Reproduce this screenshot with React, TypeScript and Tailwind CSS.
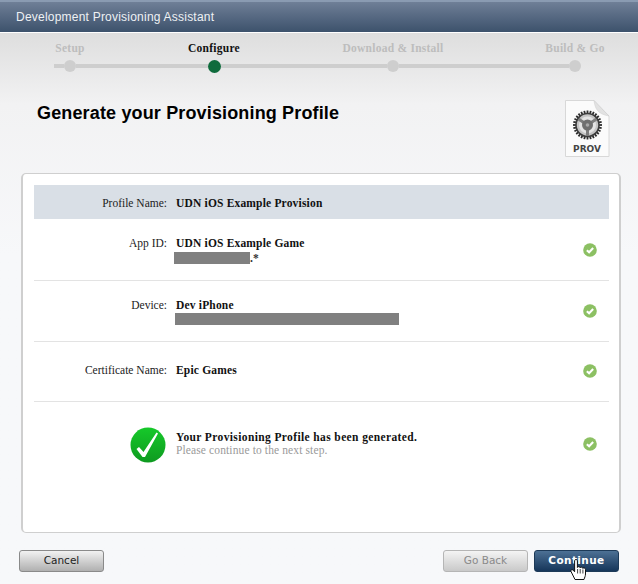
import React from "react";

const serif = "font-['Liberation_Serif','Times_New_Roman',serif]";

const SmallCheck = () => (
  <svg width="14" height="14" viewBox="0 0 16 16" className="shrink-0">
    <circle cx="8" cy="8" r="7.8" fill="#8cc063" />
    <path d="M4.4 8.2 L7 10.6 L11.6 5.8" fill="none" stroke="#fff" strokeWidth="2.4" />
  </svg>
);

const BigCheck = () => (
  <svg width="36" height="36" viewBox="0 0 36 36" className="mt-[2px]">
    <defs>
      <linearGradient id="bigGreen" x1="0" y1="0" x2="0" y2="1">
        <stop offset="0" stopColor="#16c92a" />
        <stop offset="1" stopColor="#0e9a20" />
      </linearGradient>
    </defs>
    <circle cx="18" cy="18" r="17.5" fill="url(#bigGreen)" />
    <path d="M6.5 22 L9 20 L13.5 25 L26.5 5.5 L28 6.5 L15 30 L12.5 30 Z" fill="#fff" />
  </svg>
);

const ProvIcon = () => {
  const teeth = Array.from({ length: 28 }, (_, i) => (i * 360) / 28);
  return (
    <div className="relative w-[46px] h-[58px]">
      <svg width="46" height="58" viewBox="0 0 46 58">
        <path d="M1.5 0.5 H30 L45 16 V56.5 H1.5 Z" fill="#fbfbfb" stroke="#d8d8d8" />
        <path d="M30 0.5 C31 8 33 14 45 16 C40 11 35 6 30 0.5 Z" fill="#e2e2e2" stroke="#cdcdcd" strokeWidth="0.5" />
        {teeth.map((a) => (
          <rect key={a} x="22.6" y="10.5" width="1.8" height="4" fill="#2e2e2e" transform={`rotate(${a} 23.5 25)`} />
        ))}
        <circle cx="23.5" cy="25" r="11.5" fill="#c4c4c4" stroke="#3c3c3c" strokeWidth="1.6" />
        <circle cx="23.5" cy="25" r="8.5" fill="#e4e4e4" />
        <path d="M23.5 25 L14.5 19 M23.5 25 L32.5 19 M23.5 25 V36" stroke="#7d7d7d" strokeWidth="3" />
        <circle cx="23.5" cy="25" r="5.5" fill="#6f6f6f" />
        <circle cx="23.5" cy="25" r="1.8" fill="#a8a8a8" />
      </svg>
      <span className="absolute left-0 right-0 top-[44px] text-center text-[9px] leading-[10px] font-bold text-[#444] font-['DejaVu_Sans',sans-serif]">
        PROV
      </span>
    </div>
  );
};

const HandCursor = () => (
  <svg width="17" height="23" viewBox="0 0 17 23" className="absolute left-[35px] top-[7px]">
    <path
      d="M5 21.5 L1 13.5 C0.4 12 2 11 3.2 12.2 L4.6 13.8 V3 C4.6 1 7.4 1 7.4 3 V9.5 C7.6 8.3 10 8.3 10.2 9.8 C10.5 8.8 12.6 8.9 12.8 10.4 C13.2 9.6 15.5 9.8 15.5 11.5 V16 C15.5 18 14.6 19.5 14 21.5 Z"
      fill="#fff"
      stroke="#111"
      strokeWidth="1"
      strokeLinejoin="round"
    />
    <path d="M7.6 11 V15.5 M10.2 11 V15.5 M12.9 11.5 V15.5" stroke="#111" strokeWidth="0.8" />
  </svg>
);

const steps = [
  { name: "Setup", width: "w-[144px]", active: false },
  { name: "Configure", width: "w-[179px]", active: true },
  { name: "Download & Install", width: "w-[182px]", active: false },
  { name: "Build & Go", width: "w-0", active: false },
];

const Stepper = () => (
  <div className={`pt-[9px] ${serif}`}>
    <div className="flex pl-[70px] h-[13px] items-center">
      {steps.map((s) => (
        <div key={s.name} className={`${s.width} shrink-0 relative`}>
          <div className="w-0 flex justify-center">
            <span
              className={`whitespace-nowrap text-[11.5px] font-bold tracking-[0.25px] ${
                s.active ? "text-[#111]" : "text-[#bdbdbd]"
              }`}
            >
              {s.name}
            </span>
          </div>
        </div>
      ))}
    </div>
    <div className="flex items-center pl-[54px] mt-[4px] h-[14px]">
      <div className="w-[10px] h-[4px] bg-[#cecece]" />
      <div className="w-[12px] h-[12px] rounded-full bg-[#cecece] shrink-0" />
      <div className="w-[132px] h-[4px] bg-[#cecece]" />
      <div className="w-[13px] h-[13px] rounded-full bg-[#0f6b3c] shrink-0" />
      <div className="w-[166px] h-[4px] bg-[#cecece]" />
      <div className="w-[12px] h-[12px] rounded-full bg-[#cecece] shrink-0" />
      <div className="w-[170px] h-[4px] bg-[#cecece]" />
      <div className="w-[12px] h-[12px] rounded-full bg-[#cecece] shrink-0" />
    </div>
  </div>
);

const Label = ({ children }: { children: React.ReactNode }) => (
  <div className="w-[133px] shrink-0 text-right text-[11.5px] leading-[13px] text-[#222]">{children}</div>
);

const Value = ({ children }: { children: React.ReactNode }) => (
  <div className="pl-[9px] text-[11.5px] leading-[13px] font-bold tracking-[0.18px] text-[#111]">{children}</div>
);

export default function App() {
  return (
    <div className="w-[638px] h-[584px] flex flex-col overflow-hidden bg-[#f7f8fa]">
      {/* header */}
      <div className="h-[33px] shrink-0 border-t-2 border-t-[#8a9bb2] border-b border-b-white bg-gradient-to-b from-[#6f7f97] to-[#3d526c] flex items-center pl-[16px]">
        <span className="text-[12px] tracking-[0.22px] text-[#eef1f4] font-['Liberation_Sans',Arial,sans-serif]">
          Development Provisioning Assistant
        </span>
      </div>

      <div className="flex-1 flex flex-col bg-gradient-to-b from-[#dedede] from-0% via-[#f2f2f3] via-[13%] to-[#f7f8fa] to-40%">
        <Stepper />

        {/* title */}
        <div className="flex h-[107px] items-start justify-between pl-[37px] pr-[28px] pt-[35px] mt-[-8px]">
          <h1 className="mt-[2px] text-[18px] tracking-[0.15px] leading-[22px] font-bold text-black font-['Liberation_Sans',Arial,sans-serif]">
            Generate your Provisioning Profile
          </h1>
          <ProvIcon />
        </div>

        {/* card */}
        <div className={`ml-[21px] mr-[17px] h-[360px] mt-[1px] pt-[11px] pl-[11px] pr-[10px] bg-white border border-[#cfcfcf] border-l-2 border-r-2 rounded-[5px] ${serif}`}>
          <div className="h-[34px] pt-[2px] bg-[#d9dfe6] flex items-center">
            <Label>Profile Name:</Label>
            <Value>UDN iOS Example Provision</Value>
          </div>

          <div className="h-[62px] border-b border-[#e3e3e3] flex items-center justify-between pr-[12px]">
            <div className="flex self-start pt-[18px]">
              <Label>App ID:</Label>
              <Value>
                UDN iOS Example Game
                <div className="flex items-center h-[14px] ml-[-2px] mt-[1px]">
                  <div className="w-[76px] h-[12px] bg-[#808080]" />
                  <span className="text-[#333]">.*</span>
                </div>
              </Value>
            </div>
            <SmallCheck />
          </div>

          <div className="h-[61px] border-b border-[#e3e3e3] flex items-center justify-between pr-[12px]">
            <div className="flex self-start pt-[18px]">
              <Label>Device:</Label>
              <Value>
                Dev iPhone
                <div className="w-[224px] h-[12px] bg-[#808080] ml-[-1px] mt-[1px]" />
              </Value>
            </div>
            <SmallCheck />
          </div>

          <div className="h-[60px] pb-[2px] border-b border-[#e3e3e3] flex items-center justify-between pr-[12px]">
            <div className="flex">
              <Label>Certificate Name:</Label>
              <Value>Epic Games</Value>
            </div>
            <SmallCheck />
          </div>

          <div className="h-[84px] flex items-center justify-between pr-[12px]">
            <div className="flex items-center pl-[96px]">
              <BigCheck />
              <div className="pl-[10px] text-[11.5px] leading-[13px]">
                <div className="font-bold tracking-[0.38px] text-[#111]">Your Provisioning Profile has been generated.</div>
                <div className="text-[#9a9a9a] tracking-[0.12px] font-normal">Please continue to the next step.</div>
              </div>
            </div>
            <SmallCheck />
          </div>
        </div>

        {/* footer buttons */}
        <div className="flex items-center justify-between pl-[19px] pr-[19px] mt-[17px] font-['DejaVu_Sans',sans-serif] text-[10.5px]">
          <button className="w-[85px] h-[22px] rounded-[3px] border border-[#8a8a8a] bg-gradient-to-b from-[#f2f2f2] to-[#b0b0b0] text-[#222]">
            Cancel
          </button>
          <div className="flex gap-[6px]">
            <button className="w-[85px] h-[22px] rounded-[3px] border border-[#b5b5b5] bg-gradient-to-b from-[#f4f4f4] to-[#c9c9c9] text-[#8a8a8a]">
              Go Back
            </button>
            <button className="relative w-[85px] h-[22px] rounded-[3px] border border-[#1d3a58] bg-gradient-to-b from-[#4d7195] to-[#16365a] text-white font-bold tracking-[0.4px]">
              Continue
              <HandCursor />
            </button>
          </div>
        </div>
      </div>
    </div>
  );
}
